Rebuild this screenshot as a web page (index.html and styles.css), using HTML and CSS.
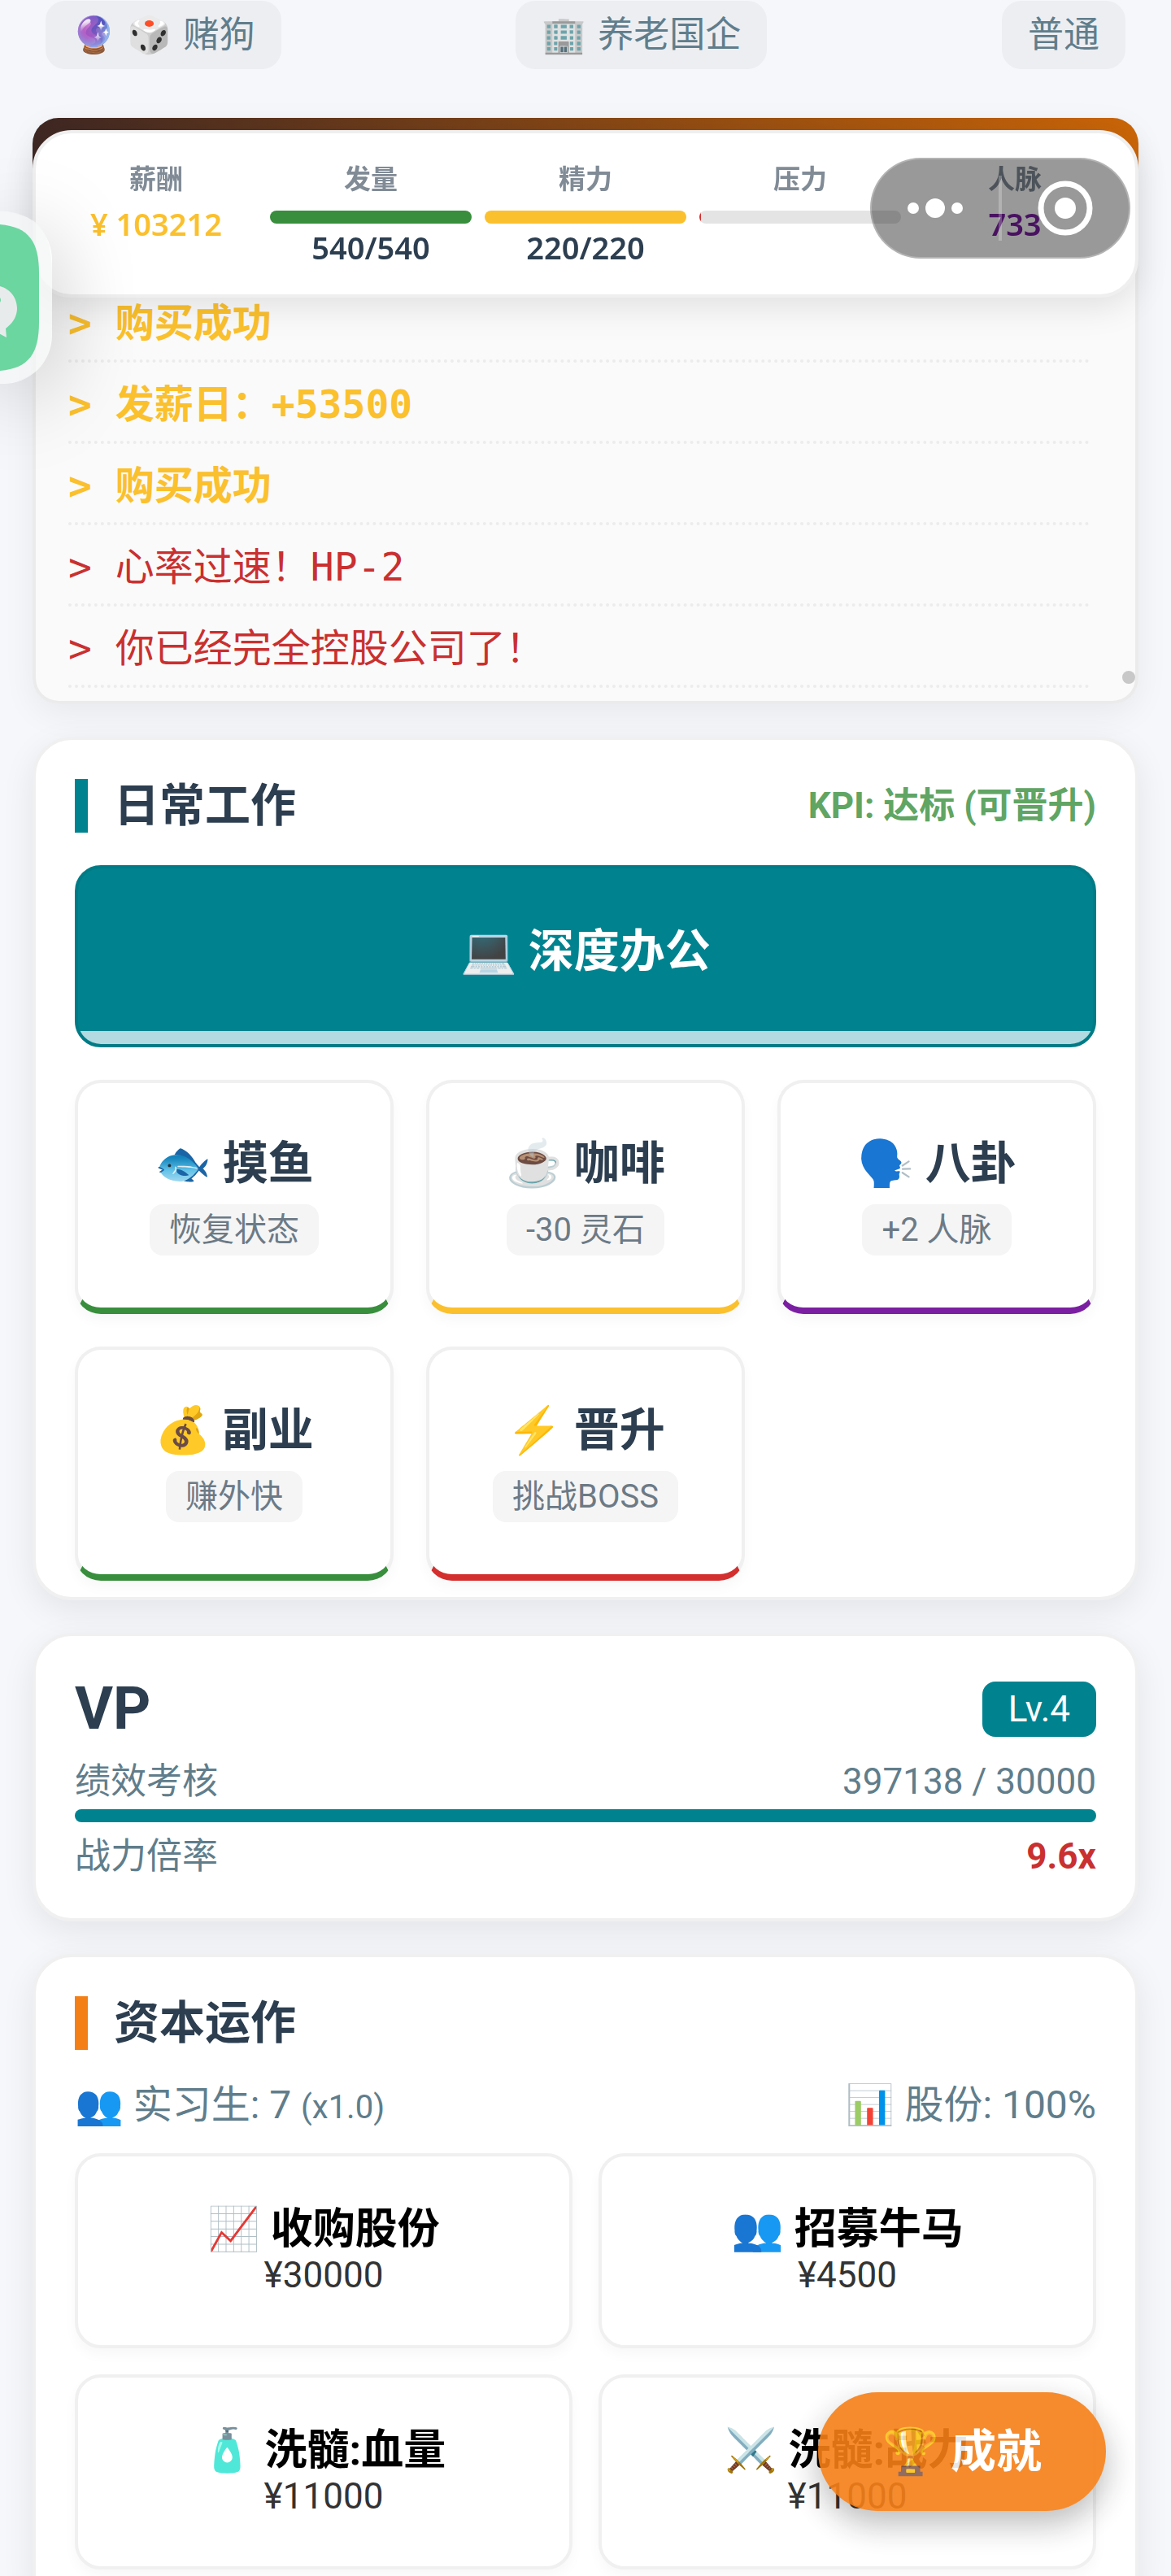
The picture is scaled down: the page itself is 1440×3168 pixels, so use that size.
FILE: index.html
```html
<!DOCTYPE html>
<html lang="zh-CN">
<head>
<meta charset="utf-8">
<meta name="viewport" content="width=device-width">
<title>职场</title>
<link rel="stylesheet" href="styles.css">
</head>
<body>
<main class="page">
  <div class="tags">
    <span class="tag"><span>🔮</span><span>🎲</span><span>赌狗</span></span>
    <span class="tag"><span>🏢</span><span>养老国企</span></span>
    <span class="tag">普通</span>
  </div>

  <section class="log">
    <div class="log-banner"></div>
    <div class="log-body">
      <ul class="log-list">
        <li class="gold">&gt; 购买成功</li>
        <li class="gold">&gt; 发薪日：+53500</li>
        <li class="gold">&gt; 购买成功</li>
        <li>&gt; 心率过速！HP-2</li>
        <li>&gt; 你已经完全控股公司了！</li>
      </ul>
      <span class="log-thumb"></span>
    </div>
  </section>

  <section class="card work">
    <div class="card-head">
      <h2 class="heading">日常工作</h2>
      <span class="kpi">KPI: 达标 (可晋升)</span>
    </div>
    <button class="deep-work">💻 深度办公<span class="deep-progress"></span></button>
    <div class="actions">
      <button class="action green"><b>🐟 摸鱼</b><small>恢复状态</small></button>
      <button class="action yellow"><b>☕ 咖啡</b><small>-30 灵石</small></button>
      <button class="action purple"><b>🗣️ 八卦</b><small>+2 人脉</small></button>
      <button class="action green"><b>💰 副业</b><small>赚外快</small></button>
      <button class="action red"><b>⚡ 晋升</b><small>挑战BOSS</small></button>
    </div>
  </section>

  <section class="card rank">
    <div class="rank-head"><h2>VP</h2><span class="level">Lv.4</span></div>
    <div class="rank-row"><span>绩效考核</span><span>397138 / 30000</span></div>
    <div class="rank-bar"></div>
    <div class="rank-row"><span>战力倍率</span><b>9.6x</b></div>
  </section>

  <section class="card capital">
    <h2 class="heading orange">资本运作</h2>
    <div class="holdings"><span>👥 实习生: 7 <small>(x1.0)</small></span><span>📊 股份: 100%</span></div>
    <div class="shop">
      <button class="item"><b>📈 收购股份</b><span>¥30000</span></button>
      <button class="item"><b>👥 招募牛马</b><span>¥4500</span></button>
      <button class="item"><b>🧴 洗髓:血量</b><span>¥11000</span></button>
      <button class="item"><b>⚔️ 洗髓:战力</b><span>¥11000</span></button>
    </div>
  </section>
</main>

<header class="status">
  <div class="stat"><span class="stat-name">薪酬</span><span class="stat-value money">¥ 103212</span></div>
  <div class="stat"><span class="stat-name">发量</span><span class="meter hair"></span><span class="stat-value">540/540</span></div>
  <div class="stat"><span class="stat-name">精力</span><span class="meter energy"></span><span class="stat-value">220/220</span></div>
  <div class="stat"><span class="stat-name">压力</span><span class="meter stress"></span></div>
  <div class="stat"><span class="stat-name">人脉</span><span class="stat-value network">733</span></div>
</header>

<div class="capsule">
  <button aria-label="更多"><svg width="68" height="24" viewBox="0 0 68 24"><circle cx="7" cy="12" r="7"/><circle cx="34" cy="12" r="12"/><circle cx="61" cy="12" r="7"/></svg></button>
  <i></i>
  <button aria-label="关闭"><svg width="68" height="68" viewBox="0 0 68 68"><circle cx="34" cy="34" r="30" fill="none" stroke="#fff" stroke-width="7"/><circle cx="34" cy="34" r="13"/></svg></button>
</div>

<button class="chat" aria-label="微信">
  <svg width="64" height="212" viewBox="0 0 64 212">
    <path d="M0 0C48 4 64 22 64 80V132C64 188 48 206 0 212Z" fill="#f4f5f6" fill-opacity=".75"/>
    <path d="M0 16C36 19 48 38 48 76V136C48 174 36 193 0 196Z" fill="#6bd6a0"/>
    <path d="M0 92C12 95 21 106 21 119C21 129 16 137 7 144L8 155L-3 149H-10V92Z" fill="#e8ebec"/>
    <circle cx="-4" cy="109" r="5" fill="#6bd6a0"/>
  </svg>
</button>

<button class="trophy">🏆 成就</button>
</body>
</html>
```
FILE: styles.css
```css
* { box-sizing: border-box; }

body {
  margin: 0;
  background: #f5f7fb;
  color: #2c3e50;
  font-family: Roboto, "Noto Sans CJK SC", "Noto Color Emoji", sans-serif;
}

h2, ul { margin: 0; padding: 0; }
button { font: inherit; color: inherit; border: 0; padding: 0; background: none; }

.page {
  height: 100vh;
  overflow-y: auto;
  scrollbar-width: none;
  padding: 1px 40px 40px;
  display: flex;
  flex-direction: column;
  gap: 40px;
}
.page > * { flex: none; }

.tags {
  display: flex;
  justify-content: space-between;
  padding: 0 16px;
  margin-bottom: 20px;
}
.tag {
  display: flex;
  gap: 14px;
  padding: 0 32px;
  line-height: 84px;
  border-radius: 24px;
  background: #edeef2;
  color: #607d8b;
  font-size: 44px;
}

/* event log */
.log {
  border-radius: 32px;
  box-shadow: 0 12px 40px rgba(0, 0, 0, .06);
}
.log-banner {
  height: 105px;
  border-radius: 32px 32px 0 0;
  background: linear-gradient(100deg, #3e2723, #cc6608);
}
.log-body {
  position: relative;
  padding: 96px 56px 16px 40px;
  border: 4px solid #ebebeb;
  border-top: 0;
  border-radius: 0 0 32px 32px;
  background: #fafafa;
}
.log-list {
  list-style: none;
  color: #c9302f;
  font: 48px/90px "DejaVu Sans Mono", "Noto Sans CJK SC", monospace;
}
.log-list li { padding-top: 6px; border-bottom: 4px dotted #ececec; }
.log-list .gold { color: #fbc02d; font-weight: 700; }
.log-thumb {
  position: absolute;
  right: 0;
  bottom: 21px;
  width: 16px;
  height: 16px;
  border-radius: 8px;
  background: #c8c8c8;
}

/* cards */
.card {
  padding: 48px;
  border: 4px solid #f0f0f0;
  border-radius: 48px;
  background: #fff;
  box-shadow: 0 12px 40px rgba(0, 0, 0, .08);
}
.card-head { display: flex; justify-content: space-between; align-items: center; }
.heading {
  padding-left: 32px;
  border-left: 16px solid #00838f;
  font-size: 56px;
  line-height: 66px;
}
.heading.orange { border-color: #f57f17; }
.kpi { color: #60a563; font-size: 44px; font-weight: 700; line-height: 66px; }

.work { padding-bottom: 20px; }
.deep-work {
  position: relative;
  display: block;
  width: 100%;
  height: 224px;
  margin: 40px 0;
  border: 4px solid #007b86;
  border-radius: 32px;
  overflow: hidden;
  background: #00838f;
  color: #fff;
  font-size: 56px;
  font-weight: 700;
  padding-bottom: 24px;
}
.deep-progress {
  position: absolute;
  left: 0;
  right: 0;
  bottom: 0;
  height: 16px;
  background: #b2dae0;
}
.actions { display: grid; grid-template-columns: repeat(3, 1fr); gap: 40px; }
.action {
  height: 288px;
  display: flex;
  flex-direction: column;
  align-items: center;
  justify-content: center;
  gap: 12px;
  padding-bottom: 4px;
  border: 4px solid #f0f0f0;
  border-bottom-width: 8px;
  border-radius: 32px;
  background: #fff;
  box-shadow: 0 8px 16px rgba(0, 0, 0, .03);
}
.action b { font-size: 56px; line-height: 76px; }
.action small {
  padding: 0 24px;
  border-radius: 16px;
  background: #f5f5f5;
  color: #6c7a86;
  font-size: 40px;
  line-height: 63px;
}
.green { border-bottom-color: #388e3c; }
.yellow { border-bottom-color: #fbc02d; }
.purple { border-bottom-color: #7b1fa2; }
.red { border-bottom-color: #d32f2f; }

/* rank */
.rank { color: #607d8b; font-size: 44px; }
.rank-head { display: flex; justify-content: space-between; align-items: center; margin-bottom: 19px; }
.rank-head h2 { color: #2c3e50; font-size: 72px; line-height: 84px; }
.level {
  padding: 0 32px;
  border-radius: 16px;
  background: #00838f;
  color: #fff;
  font-size: 44px;
  line-height: 68px;
}
.rank-row { display: flex; justify-content: space-between; line-height: 56px; }
.rank-row b { color: #c9302f; }
.rank-bar { height: 16px; margin: 6px 0 14px; border-radius: 8px; background: #00838f; }

/* capital */
.holdings {
  display: flex;
  justify-content: space-between;
  margin: 32px 0 20px;
  color: #607d8b;
  font-size: 48px;
  line-height: 72px;
}
.holdings small { font-size: 40px; }
.shop { display: grid; grid-template-columns: repeat(2, 1fr); gap: 32px; }
.item {
  height: 240px;
  display: flex;
  flex-direction: column;
  align-items: center;
  justify-content: center;
  border: 4px solid #f0f0f0;
  border-radius: 32px;
  background: #fff;
  box-shadow: 0 8px 16px rgba(0, 0, 0, .03);
}
.item b { color: #000; font-size: 52px; line-height: 60px; }
.item span { color: #333; font-size: 44px; line-height: 52px; }

/* overlays */
.status {
  position: fixed;
  top: 160px;
  left: 40px;
  right: 40px;
  display: grid;
  grid-template-columns: repeat(5, 1fr);
  gap: 16px;
  height: 206px;
  padding: 32px 24px;
  border: 4px solid #efefef;
  border-radius: 48px;
  background: #fff;
  box-shadow: 0 12px 40px rgba(0, 0, 0, .1);
}
.stat { display: flex; flex-direction: column; text-align: center; }
.stat-name { color: #808b96; font-size: 33px; font-weight: 700; line-height: 50px; }
.stat-value { font: 600 38px/58px "Noto Sans", "Noto Sans CJK SC", sans-serif; }
.money { color: #fbc02d; }
.network { color: #7b1fa2; }
.meter { height: 16px; margin-top: 13px; border-radius: 8px; background: #e4e4e4; }
.hair { background: #388e3c; }
.energy { background: #fbc02d; }
.stress { background: linear-gradient(90deg, #d32f2f 2px, #e4e4e4 2px); }

.capsule {
  position: fixed;
  top: 194px;
  right: 50px;
  width: 320px;
  height: 124px;
  display: flex;
  align-items: center;
  border: 2px solid rgba(255, 255, 255, .25);
  border-radius: 62px;
  background: rgba(0, 0, 0, .4);
}
.capsule button { flex: 1; display: flex; align-items: center; justify-content: center; }
.capsule svg { fill: #fff; }
.capsule i { width: 4px; height: 80px; background: rgba(255, 255, 255, .25); }

.chat {
  position: fixed;
  top: 260px;
  left: 0;
  border-radius: 0 60px 60px 0;
  box-shadow: 0 20px 100px rgba(0, 0, 0, .25);
}
.chat svg { display: block; }

.trophy {
  position: fixed;
  right: 80px;
  bottom: 80px;
  padding: 0 79px;
  border-radius: 73px;
  background: #f57f17;
  color: #fff;
  font-size: 56px;
  font-weight: 700;
  line-height: 146px;
  opacity: .9;
  box-shadow: 0 16px 40px rgba(0, 0, 0, .3);
}
```
